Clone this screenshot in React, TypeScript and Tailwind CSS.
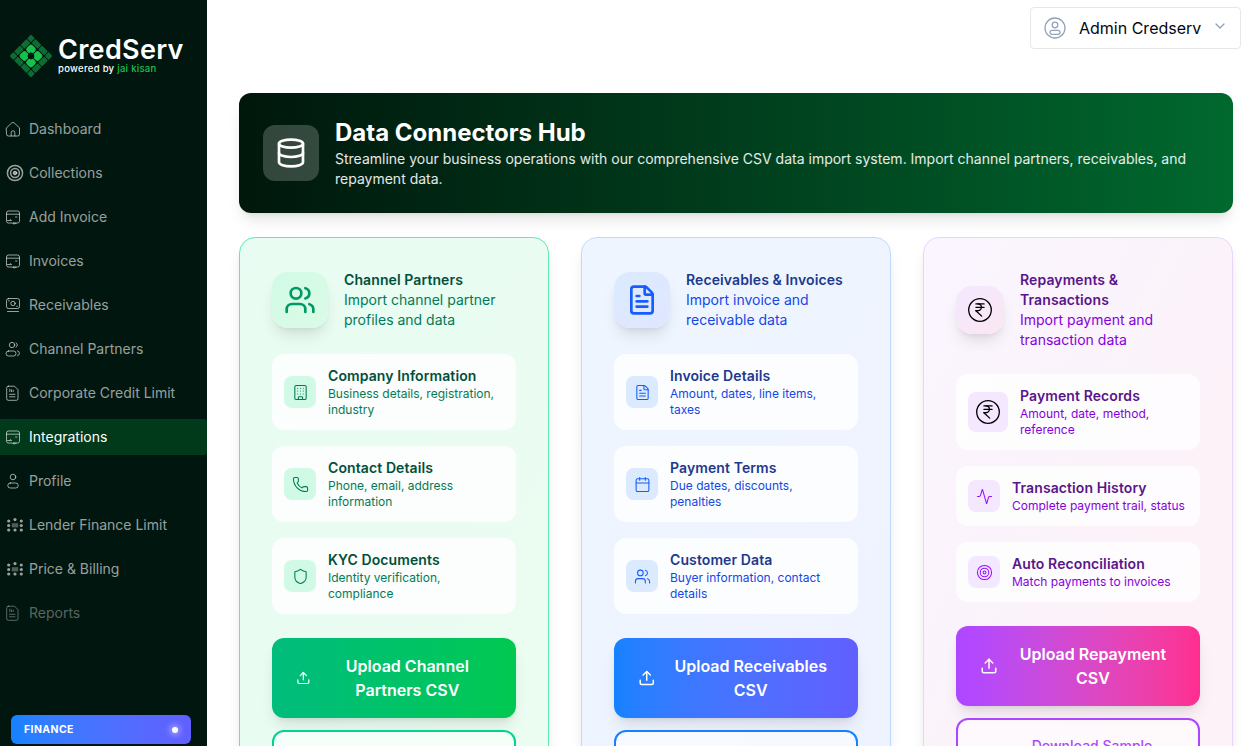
import { Activity, Building, Calendar, ChevronDown, Database, Download, FileText, Phone, Shield, Target, Upload, Users } from "lucide-react";
import type { ReactNode } from "react";

const FONT = "font-['Inter','Liberation_Sans',sans-serif]";

function LogoMark() {
  const sizes = [5.6, 8.4, 8.4, 5.6];
  const offsets = [-15.2, -8.8, 0.4, 9.6];
  return (
    <svg width="42" height="42" viewBox="-21 -21 42 42" className="shrink-0">
      <g transform="rotate(45)">
        {sizes.map((h, r) =>
          sizes.map((w, c) => {
            const inner = (r === 1 || r === 2) && (c === 1 || c === 2);
            return (
              <rect
                key={`${r}-${c}`}
                x={offsets[c]}
                y={offsets[r]}
                width={w}
                height={h}
                rx={inner ? 2.6 : 0.8}
                fill={inner ? "#16c24d" : "#0e6b33"}
              />
            );
          }),
        )}
        <circle r="3.200" fill="#00150e" />
      </g>
    </svg>
  );
}

function NavGlyph({ children }: { children: ReactNode }) {
  return (
    <svg width="16" height="16" viewBox="0 0 16 16" fill="none" stroke="currentColor" strokeWidth="1" strokeLinecap="round" strokeLinejoin="round" className="shrink-0 overflow-visible">
      {children}
    </svg>
  );
}

const HomeGlyph = () => (
  <NavGlyph>
    <path d="M1.5 6.8 6.6 2.1a2 2 0 0 1 2.8 0l5.1 4.7v6.4a1.8 1.8 0 0 1-1.8 1.8H3.3a1.8 1.8 0 0 1-1.8-1.8Z" />
    <path d="M6.2 15v-3.4a1.8 1.8 0 0 1 3.6 0V15" />
  </NavGlyph>
);
const TargetGlyph = () => (
  <NavGlyph>
    <circle cx="10" cy="8" r="7.600" strokeWidth="1.500" />
    <circle cx="10" cy="8" r="4.400" strokeWidth="1.500" />
    <circle cx="10" cy="8" r="1.800" fill="currentColor" />
  </NavGlyph>
);
const WalletGlyph = () => (
  <NavGlyph>
    <path d="M7 14H3a2 2 0 0 1-1.5-1.6V4A2 2 0 0 1 3.4 2h9.2A2 2 0 0 1 14.5 4v8.400a2 2 0 0 1-1.900 1.600H10" />
    <path d="M1.500 5.200h13" />
    <path d="M10.500 8h1.500" />
    <path d="M2.500 11.500h4l-1-1M9 13.300l-1 1 1 1M8 14.300h3" />
  </NavGlyph>
);
const ReceivableGlyph = () => (
  <NavGlyph>
    <rect x="1.500" y="1.500" width="13" height="10" rx="2" />
    <circle cx="8" cy="6.500" r="2.200" />
    <path d="M3.500 3.800h.8M11.700 9.300h.8M2.500 14.500h11" />
  </NavGlyph>
);
const PeopleGlyph = () => (
  <NavGlyph>
    <circle cx="7" cy="4" r="2.700" />
    <rect x="1" y="10" width="10" height="5" rx="2.500" />
    <path d="M11 1.800a2.500 2.500 0 0 1 0 4.400M12.500 9.800a2.600 2.600 0 0 1 0 5" />
  </NavGlyph>
);
const DocGlyph = () => (
  <NavGlyph>
    <path d="M3.300 1.200h6.200l3.500 3.500v9a1.600 1.600 0 0 1-1.600 1.600H3.300a1.600 1.600 0 0 1-1.600-1.600V2.800a1.600 1.600 0 0 1 1.600-1.600Z" />
    <path d="M4.800 4.200v2.400M6.500 4.800v1.800M8.200 5.200v1.400M4.500 9.300h5.500M4.500 11.800h5.500" />
  </NavGlyph>
);
const ProfileGlyph = () => (
  <NavGlyph>
    <circle cx="8" cy="4" r="2.800" />
    <rect x="2.800" y="10" width="10.400" height="5" rx="2.500" />
  </NavGlyph>
);
const DotsGlyph = () => (
  <NavGlyph>
    <g fill="currentColor" stroke="none">
      <circle cx="3.700" cy="4" r="1.600" />
      <circle cx="10" cy="2.600" r="1.600" />
      <circle cx="16.300" cy="4" r="1.600" />
      <circle cx="3.700" cy="8.500" r="1.600" />
      <circle cx="16.300" cy="8.500" r="1.600" />
      <circle cx="3.700" cy="13" r="1.600" />
      <circle cx="10" cy="13" r="1.600" />
      <circle cx="16.300" cy="13" r="1.600" />
      <rect x="6.800" y="6.200" width="6.400" height="4.200" opacity="0.5" />
    </g>
  </NavGlyph>
);

const nav = [
  { label: "Dashboard", icon: <HomeGlyph /> },
  { label: "Collections", icon: <TargetGlyph /> },
  { label: "Add Invoice", icon: <WalletGlyph /> },
  { label: "Invoices", icon: <WalletGlyph /> },
  { label: "Receivables", icon: <ReceivableGlyph /> },
  { label: "Channel Partners", icon: <PeopleGlyph /> },
  { label: "Corporate Credit Limit", icon: <DocGlyph /> },
  { label: "Integrations", icon: <WalletGlyph />, active: true },
  { label: "Profile", icon: <ProfileGlyph /> },
  { label: "Lender Finance Limit", icon: <DotsGlyph /> },
  { label: "Price & Billing", icon: <DotsGlyph /> },
  { label: "Reports", icon: <DocGlyph />, dim: true },
];

function Sidebar() {
  return (
    <aside className="flex h-full w-[207px] shrink-0 flex-col bg-[#00160e]">
      <div className="flex h-[111px] shrink-0 items-start gap-[6px] pl-[10px] pt-[35px]">
        <LogoMark />
        <div className="pt-[1px]">
          <div className="text-[27px] font-semibold leading-[27px] tracking-[0.3px] text-white">CredServ</div>
          <div className="text-[9.500px] font-medium leading-[12px] tracking-[0.3px] text-white">
            powered by <span className="text-[#1cc04f]">jai kisan</span>
          </div>
        </div>
      </div>
      <nav className="flex flex-col gap-2">
        {nav.map((item) => (
          <div
            key={item.label}
            className={
              item.active
                ? "flex h-9 items-center gap-2 rounded-r-[3px] bg-[#013a1a] pl-[5px] text-sm text-white"
                : item.dim
                  ? "flex h-9 items-center gap-2 pl-[5px] text-sm text-white/35"
                  : "flex h-9 items-center gap-2 pl-[5px] text-sm text-white/60"
            }
          >
            <span className={item.active ? "text-white/60" : ""}>{item.icon}</span>
            {item.label}
          </div>
        ))}
      </nav>
      <div className="mb-[2px] ml-[11px] mr-[16px] mt-auto flex h-[29px] items-center justify-between rounded-md bg-gradient-to-r from-[#1482ff] to-indigo-500 px-[13px] text-[10.500px] font-bold tracking-[0.4px] text-white">
        FINANCE
        <span className="h-[6px] w-[6px] rounded-full bg-white shadow-[0_0_6px_2px_rgba(255,255,255,0.45)]" />
      </div>
    </aside>
  );
}

function RupeeCircle() {
  return (
    <svg width="24" height="24" viewBox="0 0 24 24" fill="none" stroke="#000" strokeWidth="1.300" className="shrink-0">
      <circle cx="12" cy="12" r="11.300" />
      <g strokeWidth="1.900" strokeLinecap="round" strokeLinejoin="round" transform="translate(3.840 3.840) scale(0.68)">
        <path d="M6 3h12" />
        <path d="M6 8h12" />
        <path d="m6 13 8.500 8" />
        <path d="M6 13h3" />
        <path d="M9 13c6.667 0 6.667-10 0-10" />
      </g>
    </svg>
  );
}

type Feature = { title: string; desc: string; icon: ReactNode; wide?: boolean };

type Theme = {
  card: string;
  badge: string;
  title: string;
  desc: string;
  tile: string;
  tileIcon: string;
  upload: string;
  sample: string;
};

function Connector(props: {
  theme: Theme;
  title: string;
  desc: string;
  icon: ReactNode;
  narrowBadge?: boolean;
  features: Feature[];
  upload: string;
}) {
  const { theme, features } = props;
  return (
    <section className={`flex flex-col rounded-2xl border p-8 shadow-lg ${theme.card}`}>
      <div className="mb-6 flex items-center gap-4">
        <div className={`flex shrink-0 items-center justify-center rounded-2xl bg-gradient-to-br shadow-lg ${theme.badge} ${props.narrowBadge ? "h-12 w-12" : "h-14 w-14"}`}>
          {props.icon}
        </div>
        <div className="text-sm leading-5">
          <h3 className={`font-semibold tracking-[0.1px] ${theme.title}`}>{props.title}</h3>
          <p className={theme.desc}>{props.desc}</p>
        </div>
      </div>
      <div className="mb-6 flex flex-col gap-4">
        {features.map((f) => (
          <div key={f.title} className="flex items-center gap-3 rounded-xl bg-white/80 p-3">
            <div className={`flex shrink-0 items-center justify-center rounded-lg ${theme.tile} ${theme.tileIcon} ${f.wide ? "h-10 w-10" : "h-8 w-8"}`}>
              {f.icon}
            </div>
            <div>
              <h4 className={`text-sm font-semibold leading-5 tracking-[0.1px] ${theme.title}`}>{f.title}</h4>
              <p className={`text-xs leading-4 ${theme.desc}`}>{f.desc}</p>
            </div>
          </div>
        ))}
      </div>
      <button className={`flex items-center justify-center gap-3 rounded-xl bg-gradient-to-r px-6 py-4 text-base font-semibold text-white shadow-lg ${theme.upload}`}>
        <Upload className="h-5 w-5" />
        <span>{props.upload}</span>
      </button>
      <button className={`mt-3 flex items-center justify-center gap-2 rounded-xl border-2 bg-white/50 px-6 py-4 text-sm font-medium ${theme.sample}`}>
        <Download className="h-5 w-5" />
        <span>
          Download Sample
          <br />
          CSV
        </span>
      </button>
    </section>
  );
}

const green: Theme = {
  card: "border-emerald-300 bg-gradient-to-br from-[#e8fcf3] to-[#ecfdf0]",
  badge: "from-emerald-100 to-green-100",
  title: "text-emerald-900",
  desc: "text-emerald-700",
  tile: "bg-emerald-100",
  tileIcon: "text-emerald-700",
  upload: "from-emerald-500 to-green-500",
  sample: "border-emerald-400 text-emerald-500",
};

const blue: Theme = {
  card: "border-blue-200 bg-gradient-to-br from-blue-50 to-indigo-50",
  badge: "from-blue-100 to-indigo-100",
  title: "text-blue-900",
  desc: "text-blue-700",
  tile: "bg-blue-100",
  tileIcon: "text-blue-600",
  upload: "from-[#1482ff] to-indigo-500",
  sample: "border-[#1482ff] text-blue-500",
};

const purple: Theme = {
  card: "border-purple-200 bg-gradient-to-br from-purple-50 to-pink-50 to-70%",
  badge: "from-purple-100 to-pink-100",
  title: "text-purple-900",
  desc: "text-purple-700",
  tile: "bg-purple-100",
  tileIcon: "text-purple-600",
  upload: "from-purple-500 to-[#ff2d8f]",
  sample: "border-purple-500 text-purple-500",
};

export default function App() {
  return (
    <div className={`flex h-screen overflow-hidden bg-white ${FONT}`}>
      <Sidebar />
      <main className="min-w-0 flex-1 overflow-hidden">
        <header className="flex h-[93px] justify-end pr-[18px] pt-[7px]">
          <div className="flex h-[42px] w-[211px] items-center rounded-[4px] border border-gray-200 bg-white pl-[13px]">
            <svg width="22" height="22" viewBox="0 0 22 22" fill="none" stroke="#94a3b8" strokeWidth="1.300" className="shrink-0">
              <circle cx="11" cy="11" r="10" />
              <circle cx="11" cy="8" r="2.800" />
              <rect x="6" y="13.300" width="10" height="4" rx="2" />
            </svg>
            <span className="ml-[13px] text-base text-gray-950">Admin Credserv</span>
            <ChevronDown className="mb-1 ml-[11px] h-4 w-4 text-slate-400" />
          </div>
        </header>
        <div className="pl-8 pr-[26px]">
          <div className="mb-6 flex items-center gap-4 rounded-xl bg-gradient-to-r from-[#00170c] to-[#00692e] p-6 text-white shadow-lg">
            <div className="flex h-14 w-14 shrink-0 items-center justify-center rounded-xl bg-white/20">
              <Database className="h-8 w-8" />
            </div>
            <div>
              <h1 className="text-2xl font-bold">Data Connectors Hub</h1>
              <p className="text-sm leading-5 text-white/90">
                Streamline your business operations with our comprehensive CSV data import system. Import channel partners, receivables, and repayment data.
              </p>
            </div>
          </div>
          <div className="grid grid-cols-3 gap-8">
            <Connector
              theme={green}
              title="Channel Partners"
              desc="Import channel partner profiles and data"
              icon={<Users className="h-8 w-8 text-emerald-600" />}
              upload="Upload Channel Partners CSV"
              features={[
                { title: "Company Information", desc: "Business details, registration, industry", icon: <Building size={17} strokeWidth={1.5} /> },
                { title: "Contact Details", desc: "Phone, email, address information", icon: <Phone size={17} strokeWidth={1.5} /> },
                { title: "KYC Documents", desc: "Identity verification, compliance", icon: <Shield size={17} strokeWidth={1.5} /> },
              ]}
            />
            <Connector
              theme={blue}
              title="Receivables & Invoices"
              desc="Import invoice and receivable data"
              icon={<FileText className="h-8 w-8 text-blue-600" />}
              upload="Upload Receivables CSV"
              features={[
                { title: "Invoice Details", desc: "Amount, dates, line items, taxes", icon: <FileText size={17} strokeWidth={1.5} /> },
                { title: "Payment Terms", desc: "Due dates, discounts, penalties", icon: <Calendar size={17} strokeWidth={1.5} /> },
                { title: "Customer Data", desc: "Buyer information, contact details", icon: <Users size={17} strokeWidth={1.5} /> },
              ]}
            />
            <Connector
              theme={purple}
              title="Repayments & Transactions"
              desc="Import payment and transaction data"
              icon={<RupeeCircle />}
              narrowBadge
              upload="Upload Repayment CSV"
              features={[
                { title: "Payment Records", desc: "Amount, date, method, reference", icon: <RupeeCircle />, wide: true },
                { title: "Transaction History", desc: "Complete payment trail, status", icon: <Activity size={17} strokeWidth={1.5} /> },
                { title: "Auto Reconciliation", desc: "Match payments to invoices", icon: <Target size={17} strokeWidth={1.5} /> },
              ]}
            />
          </div>
        </div>
      </main>
    </div>
  );
}
